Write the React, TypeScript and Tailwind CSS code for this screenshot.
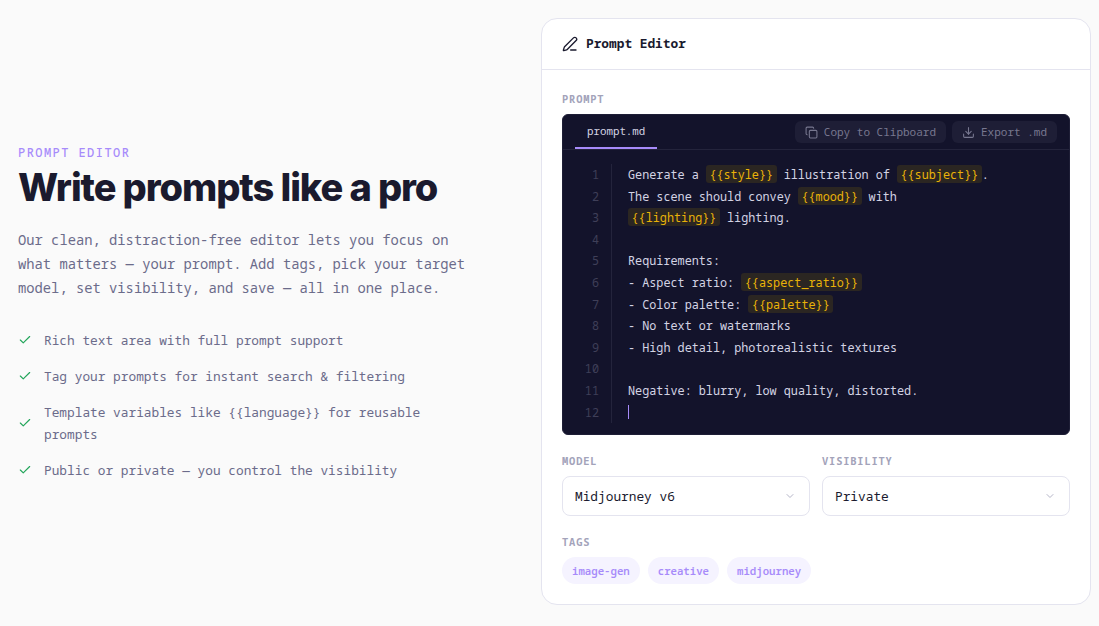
import { Check, ChevronDown, Copy, Download, PenLine } from "lucide-react";
import type { ReactNode } from "react";

const mono = "font-['Noto_Sans_Mono','DejaVu_Sans_Mono',monospace]";

const features = [
  "Rich text area with full prompt support",
  "Tag your prompts for instant search & filtering",
  "Template variables like {{language}} for reusable prompts",
  "Public or private — you control the visibility",
];

function Variable({ children }: { children: string }) {
  return (
    <span className="rounded-[3px] bg-[#2b2622] px-[3.5px] py-px text-[#eab308]">
      {children}
    </span>
  );
}

const codeLines: ReactNode[] = [
  <>
    Generate a <Variable>{"{{style}}"}</Variable> illustration of{" "}
    <Variable>{"{{subject}}"}</Variable>.
  </>,
  <>
    The scene should convey <Variable>{"{{mood}}"}</Variable> with
  </>,
  <>
    <Variable>{"{{lighting}}"}</Variable> lighting.
  </>,
  "",
  "Requirements:",
  <>
    - Aspect ratio: <Variable>{"{{aspect_ratio}}"}</Variable>
  </>,
  <>
    - Color palette: <Variable>{"{{palette}}"}</Variable>
  </>,
  "- No text or watermarks",
  "- High detail, photorealistic textures",
  "",
  "Negative: blurry, low quality, distorted.",
  <span className="inline-block h-[14px] w-px translate-y-[2px] bg-[#a78bfa]" />,
];

function FieldLabel({ children }: { children: string }) {
  return (
    <p className="mb-[7px] text-[10.4px] leading-[15px] font-bold tracking-[0.08em] text-[#a3a3ba] uppercase">
      {children}
    </p>
  );
}

function SelectField({ label, value }: { label: string; value: string }) {
  return (
    <div>
      <FieldLabel>{label}</FieldLabel>
      <div className="flex h-10 items-center justify-between rounded-lg border border-[#e4e4ef] bg-white pr-[13px] pl-3 text-[12.8px] text-[#1a1a2e]">
        {value}
        <ChevronDown className="size-3 text-[#b5b5c8]" />
      </div>
    </div>
  );
}

function ToolbarButton({ icon, label }: { icon: ReactNode; label: string }) {
  return (
    <button className="flex h-[22px] items-center gap-[6px] rounded-md bg-[#1e1e36] px-[10px] text-[11px] text-[#77778f]">
      {icon}
      {label}
    </button>
  );
}

export default function App() {
  return (
    <div className={`flex h-[626px] items-start justify-between bg-[#fafafa] pt-[18px] pr-2 pl-[18px] ${mono}`}>
      <section className="w-[455px] self-center pb-[20px]">
        <p className="text-[12px] leading-[18px] font-medium tracking-[0.12em] text-[#a78bfa] uppercase">
          Prompt Editor
        </p>
        <h1 className="mt-[2px] font-['Inter',sans-serif] text-[38px] leading-[46px] font-extrabold tracking-[-1.08px] text-[#1a1a2e]">
          Write prompts like a pro
        </h1>
        <p className="mt-[18px] w-[455px] text-[13.8px] leading-[24px] text-[#6b6b8a]">
          Our clean, distraction-free editor lets you focus on what matters — your prompt. Add
          tags, pick your target model, set visibility, and save — all in one place.
        </p>
        <ul className="mt-[29px] flex flex-col gap-[14px]">
          {features.map((feature) => (
            <li key={feature} className="flex items-center gap-[12px] text-[12.8px] leading-[22px] text-[#6b6b8a]">
              <Check className="size-[14px] shrink-0 text-[#22a55a]" />
              <span>{feature}</span>
            </li>
          ))}
        </ul>
      </section>

      <section className="w-[550px] shrink-0 rounded-2xl border border-[#e4e4ef] bg-white">
        <header className="flex h-[51px] items-center gap-2 border-b border-[#e4e4ef] px-5">
          <PenLine className="size-4 text-[#1a1a2e]" />
          <h2 className="text-[12.8px] font-bold text-[#1a1a2e]">Prompt Editor</h2>
        </header>

        <div className="px-5 pt-[22px] pb-5">
          <FieldLabel>Prompt</FieldLabel>
          <div className="overflow-hidden rounded-md border border-[#1e1e36] bg-[#13132b]">
            <div className="flex h-[35px] items-center justify-between border-b border-[#24243c] pr-3 pl-3">
              <div className="flex h-full items-center border-b-2 border-[#a78bfa] px-3 text-[10.8px] text-[#d4d4e4]">
                prompt.md
              </div>
              <div className="flex gap-[6px]">
                <ToolbarButton icon={<Copy className="size-[13px]" />} label="Copy to Clipboard" />
                <ToolbarButton icon={<Download className="size-[13px]" />} label="Export .md" />
              </div>
            </div>
            <div className="flex px-3 pt-[14px] pb-[11px] text-[11.8px] leading-[21.6px]">
              <div className="w-[37px] border-r border-[#24243c] pr-3 text-right text-[#3f3f58]">
                {codeLines.map((_, i) => (
                  <div key={i} className="h-[21.6px]">
                    {i + 1}
                  </div>
                ))}
              </div>
              <div className="pl-4 text-[#d4d4e4]">
                {codeLines.map((line, i) => (
                  <div key={i} className="h-[21.6px] whitespace-pre">
                    {line}
                  </div>
                ))}
              </div>
            </div>
          </div>

          <div className="mt-[19px] grid grid-cols-2 gap-3">
            <SelectField label="Model" value="Midjourney v6" />
            <SelectField label="Visibility" value="Private" />
          </div>

          <div className="mt-[19px]">
            <FieldLabel>Tags</FieldLabel>
            <div className="flex gap-2">
              {["image-gen", "creative", "midjourney"].map((tag) => (
                <span
                  key={tag}
                  className="flex h-[27px] items-center rounded-full bg-[#f5f3ff] px-[10px] text-[10.7px] font-semibold text-[#a78bfa]"
                >
                  {tag}
                </span>
              ))}
            </div>
          </div>
        </div>
      </section>
    </div>
  );
}
